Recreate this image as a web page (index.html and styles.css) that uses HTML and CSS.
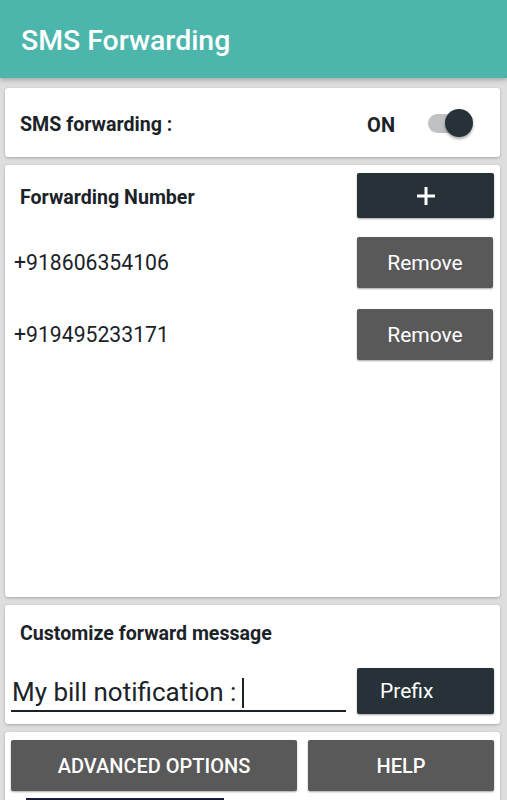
FILE: index.html
```html
<!DOCTYPE html>
<html lang="en">
<head>
    <meta charset="UTF-8">
    <meta name="viewport" content="width=device-width, initial-scale=1.0">
    <title>SMS Forwarding</title>
    <link rel="stylesheet" href="styles.css">
</head>
<body>
    <header class="appbar">
        <h1>SMS Forwarding</h1>
    </header>

    <main class="content">
        <section class="card status-card">
            <span class="label">SMS forwarding :</span>
            <span class="state">ON</span>
            <span class="switch"><span class="thumb"></span></span>
        </section>

        <section class="card numbers-card">
            <div class="numbers-head">
                <span class="label">Forwarding Number</span>
                <button class="btn btn-dark btn-add">
                    <svg width="22" height="22" viewBox="0 0 22 22"><path d="M11 2v18M2 11h18" stroke="#fff" stroke-width="3"/></svg>
                </button>
            </div>
            <div class="number-row">
                <span class="number">+918606354106</span>
                <button class="btn btn-grey btn-remove">Remove</button>
            </div>
            <div class="number-row">
                <span class="number">+919495233171</span>
                <button class="btn btn-grey btn-remove">Remove</button>
            </div>
        </section>

        <section class="card message-card">
            <span class="label">Customize forward message</span>
            <div class="message-row">
                <div class="message-input">My bill notification :<span class="caret"></span></div>
                <button class="btn btn-dark btn-prefix">Prefix</button>
            </div>
        </section>

        <section class="card actions-card">
            <div class="actions">
                <button class="btn btn-grey btn-advanced">ADVANCED OPTIONS</button>
                <button class="btn btn-grey btn-help">HELP</button>
            </div>
            <div class="ad-strip"></div>
        </section>
    </main>
</body>
</html>
```

FILE: styles.css
```css
body {
    margin: 0;
    padding: 0;
    font-family: Roboto, "Liberation Sans", sans-serif;
    background-color: #dedede;
    color: #1b2329;
    height: 800px;
    overflow: hidden;
}
.appbar {
    height: 78px;
    background-color: #4db6ac;
    box-shadow: 0 2px 5px rgba(0, 0, 0, 0.25);
    display: flex;
    align-items: center;
    padding: 0 21px;
    position: relative;
}
.appbar h1 {
    margin: 0;
    font-size: 28.4px;
    font-weight: 500;
    color: #fff;
    padding-top: 3px;
}
.content {
    padding: 10px 7px 0 5px;
    display: flex;
    flex-direction: column;
    gap: 8px;
}
.card {
    background: #fff;
    border-radius: 3px;
    box-shadow: 0 1px 3px rgba(0, 0, 0, 0.25);
}
.label {
    font-size: 19.6px;
    font-weight: 700;
}
.btn {
    border: none;
    border-radius: 2px;
    color: #fff;
    font-family: Roboto, "Liberation Sans", sans-serif;
    box-shadow: 0 1px 2px rgba(0, 0, 0, 0.35);
    padding: 0;
}
.btn-dark {
    background-color: #263238;
}
.btn-grey {
    background-color: #595959;
}

/* status */
.status-card {
    height: 69px;
    display: flex;
    align-items: center;
    padding: 0 0 0 15px;
}
.status-card .label {
    flex: 1;
}
.status-card .label, .state {
    margin-top: 4px;
}
.state {
    font-size: 20px;
    font-weight: 700;
    margin-right: 33px;
}
.switch {
    width: 34px;
    height: 19px;
    border-radius: 10px;
    background: #bfc1c3;
    position: relative;
    margin-right: 38px;
    margin-top: 1px;
}
.thumb {
    position: absolute;
    width: 28px;
    height: 28px;
    border-radius: 50%;
    background: #263238;
    top: -5px;
    left: 17px;
    box-shadow: 0 2px 3px rgba(0, 0, 0, 0.35);
}

/* numbers */
.numbers-card {
    height: 432px;
}
.numbers-head {
    display: flex;
    align-items: center;
    justify-content: space-between;
    padding: 8px 6px 0 15px;
    height: 45px;
}
.numbers-head .label {
    margin-top: 3px;
}
.btn-add {
    width: 137px;
    height: 45px;
    display: flex;
    align-items: center;
    justify-content: center;
}
.number-row {
    display: flex;
    align-items: center;
    justify-content: space-between;
    height: 67px;
    padding: 0 7px 0 9px;
    margin-top: 5px;
}
.numbers-head + .number-row {
    margin-top: 11px;
}
.number {
    font-size: 21.2px;
}
.btn-remove {
    width: 136px;
    height: 51px;
    font-size: 21px;
}

/* message */
.message-card {
    height: 119px;
    padding: 0 6px 0 15px;
    display: flex;
    flex-direction: column;
}
.message-card .label {
    margin-top: 17px;
}
.message-row {
    display: flex;
    align-items: flex-end;
    justify-content: space-between;
    margin-top: 23px;
    margin-left: -9px;
}
.message-input {
    width: 334px;
    font-size: 26px;
    padding: 0 0 2px 1px;
    border-bottom: 2px solid #1b2329;
    line-height: 31px;
    display: flex;
    align-items: center;
    margin-bottom: 7px;
}
.caret {
    display: inline-block;
    width: 2px;
    height: 30px;
    background: #1b2329;
    margin-left: 6px;
}
.btn-prefix {
    width: 137px;
    height: 46px;
    font-size: 21px;
    text-align: left;
    padding-left: 23px;
    margin-bottom: 5px;
}

/* actions */
.actions-card {
    padding: 8px 6px 0 6px;
    height: 80px;
}
.actions {
    display: flex;
    gap: 11px;
}
.btn-advanced, .btn-help {
    height: 51px;
    font-size: 20px;
    font-weight: 500;
}
.btn-advanced {
    width: 286px;
}
.btn-help {
    flex: 1;
}
.ad-strip {
    width: 198px;
    height: 6px;
    margin: 7px 0 0 15px;
    background: #1a1a40;
}
```
